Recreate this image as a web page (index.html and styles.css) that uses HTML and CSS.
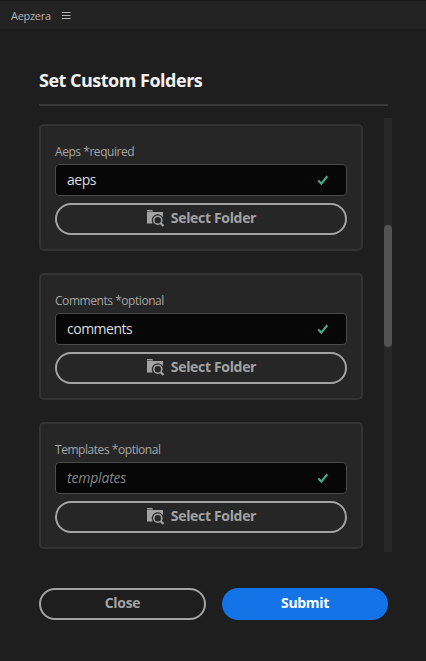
FILE: index.html
```html
<!DOCTYPE html>
<html lang="en">
<head>
<meta charset="utf-8">
<title>Aepzera</title>
<link rel="stylesheet" href="styles.css">
</head>
<body>
<svg class="defs" width="0" height="0">
  <symbol id="folder" viewBox="0 0 18 18">
    <path fill="currentColor" d="M0 0h5.2l1 1.5H0zM0 2h16v5.2A5.7 5.7 0 0 0 5.6 13.6H0z"/>
    <circle cx="10.8" cy="10.2" r="4" fill="#262626" stroke="currentColor" stroke-width="1.6"/>
    <path d="M13.5 12.9l3 3.1" stroke="currentColor" stroke-width="2.2" fill="none"/>
  </symbol>
  <symbol id="check" viewBox="0 0 12 12">
    <path d="M1.3 6.4l3 3.2 6-7.4" fill="none" stroke="#43a98a" stroke-width="2.2"/>
  </symbol>
</svg>
<header class="bar">
  <span class="name">Aepzera</span>
  <svg class="menu" width="9" height="8" viewBox="0 0 9 8"><path d="M0 .5h8.5M0 3.5h8.5M0 6.5h8.5" stroke="#b4b4b4"/></svg>
</header>
<main class="panel">
  <h1>Set Custom Folders</h1>
  <div class="scroll">
    <div class="cards">
      <section class="card">
        <label class="label">Aeps *required</label>
        <div class="field"><span>aeps</span><svg class="check"><use href="#check"/></svg></div>
        <button class="btn"><svg class="folder"><use href="#folder"/></svg><span>Select Folder</span></button>
      </section>
      <section class="card">
        <label class="label">Comments *optional</label>
        <div class="field"><span>comments</span><svg class="check"><use href="#check"/></svg></div>
        <button class="btn"><svg class="folder"><use href="#folder"/></svg><span>Select Folder</span></button>
      </section>
      <section class="card">
        <label class="label">Templates *optional</label>
        <div class="field"><span class="placeholder">templates</span><svg class="check"><use href="#check"/></svg></div>
        <button class="btn"><svg class="folder"><use href="#folder"/></svg><span>Select Folder</span></button>
      </section>
    </div>
    <div class="track"><div class="thumb"></div></div>
  </div>
  <footer class="actions">
    <button class="btn close">Close</button>
    <button class="btn submit">Submit</button>
  </footer>
</main>
</body>
</html>
```
FILE: styles.css
```css
* { box-sizing: border-box; }
body {
  margin: 0;
  height: 661px;
  overflow: hidden;
  background: #1e1e1e;
  color: #a5a5a5;
  font-family: "Open Sans", "Noto Sans", sans-serif;
}
.defs { position: absolute; }
.bar {
  display: flex;
  align-items: center;
  gap: 11px;
  height: 29px;
  padding: 0 11px;
  background: #232323;
  border-top: 1px solid #191919;
  color: #b4b4b4;
  font-size: 11px;
}
.name { width: 40px; white-space: nowrap; letter-spacing: -.3px; }
.menu { margin-top: 1px; }
.panel { width: 353px; margin-left: 39px; }
h1 {
  width: 349px;
  height: 77px;
  margin: 0;
  padding-top: 39px;
  border-bottom: 2px solid #393939;
  color: #f2f2f2;
  font-size: 18px;
  line-height: 24px;
  font-weight: 700;
  letter-spacing: -.5px;
}
.scroll {
  display: flex;
  justify-content: space-between;
  height: 434px;
  margin-top: 12px;
}
.cards {
  display: flex;
  flex-direction: column;
  gap: 22px;
  width: 324px;
  padding-top: 6px;
}
.card {
  height: 127px;
  padding: 16px 14px 0;
  background: #262626;
  border: 2px solid #333;
  border-radius: 5px;
}
.label {
  display: block;
  height: 22px;
  font-size: 12px;
  line-height: 20px;
  letter-spacing: -.45px;
}
.field {
  display: flex;
  align-items: center;
  justify-content: space-between;
  height: 32px;
  margin-bottom: 7px;
  padding: 0 17px 2px 11px;
  background: #070707;
  border: 1px solid #4a4a4a;
  border-radius: 4px;
  color: #dedede;
  font-size: 14px;
  letter-spacing: -.5px;
}
.placeholder { color: #858585; font-style: italic; letter-spacing: -.2px; }
.check { width: 12px; height: 12px; margin-top: 2px; }
.btn {
  display: flex;
  align-items: center;
  justify-content: center;
  width: 100%;
  height: 32px;
  padding: 0 0 3px;
  border: 2px solid #a3a3a3;
  border-radius: 16px;
  background: transparent;
  color: #a3a3a3;
  font: 700 14px "Open Sans", "Noto Sans", sans-serif;
  letter-spacing: -.33px;
}
.folder { width: 18px; height: 18px; margin: 3px 6px 0 1px; }
.track { width: 8px; background: #282828; padding-top: 107px; }
.thumb { height: 122px; border-radius: 4px; background: #535353; }
.actions {
  display: flex;
  gap: 16px;
  width: 349px;
  margin-top: 36px;
}
.close { width: 167px; }
.submit { width: 166px; border-color: #1473e6; background: #1473e6; color: #fff; }
```
